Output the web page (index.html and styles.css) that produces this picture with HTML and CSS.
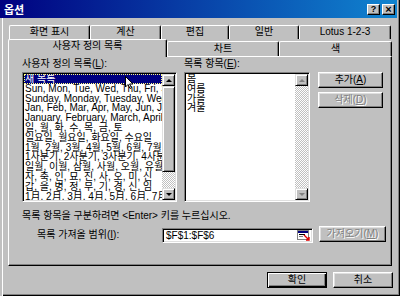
FILE: index.html
```html
<!DOCTYPE html>
<html lang="ko">
<head>
<meta charset="UTF-8">
<meta name="viewport" content="width=device-width, initial-scale=1.0">
<title>옵션</title>
<link rel="stylesheet" href="styles.css">
</head>
<body>
<div class="dialog">
  <div class="titlebar">
    <span class="title">옵션</span>
    <span class="tbtn">?</span>
    <span class="tbtn close">×</span>
  </div>

  <div class="tabs">
    <div class="tabrow back">
      <div class="tab t-view">화면 표시</div>
      <div class="tab t-calc">계산</div>
      <div class="tab t-edit">편집</div>
      <div class="tab t-gen">일반</div>
      <div class="tab t-lotus">Lotus 1-2-3</div>
    </div>
    <div class="tabrow front">
      <div class="tab t-lists active">사용자 정의 목록</div>
      <div class="tab t-chart">차트</div>
      <div class="tab t-color">색</div>
    </div>
  </div>

  <div class="panel">
    <div class="lists">
      <div class="col-lists">
        <div class="label">사용자 정의 목록(<u>L</u>):</div>
        <div class="listbox">
          <div class="items">
            <div class="item selected">새 목록</div>
            <div class="item">Sun, Mon, Tue, Wed, Thu, Fri, Sat</div>
            <div class="item">Sunday, Monday, Tuesday, Wednesday</div>
            <div class="item">Jan, Feb, Mar, Apr, May, Jun, Jul</div>
            <div class="item">January, February, March, April</div>
            <div class="item">일, 월, 화, 수, 목, 금, 토</div>
            <div class="item">일요일, 월요일, 화요일, 수요일</div>
            <div class="item">1월, 2월, 3월, 4월, 5월, 6월, 7월</div>
            <div class="item">1사분기, 2사분기, 3사분기, 4사분기</div>
            <div class="item">일월, 이월, 삼월, 사월, 오월, 유월</div>
            <div class="item">자, 축, 인, 묘, 진, 사, 오, 미, 신</div>
            <div class="item">갑, 을, 병, 정, 무, 기, 경, 신, 임</div>
            <div class="item">1月, 2月, 3月, 4月, 5月, 6月, 7月</div>
          </div>
          <div class="scroll">
            <div class="sbtn up"></div>
            <div class="thumb"></div>
            <div class="track"></div>
            <div class="sbtn down"></div>
          </div>
        </div>
      </div>

      <div class="col-items">
        <div class="label">목록 항목(<u>E</u>):</div>
        <div class="listbox">
          <div class="items">
            <div class="item">봄</div>
            <div class="item">여름</div>
            <div class="item">가을</div>
            <div class="item">겨울</div>
          </div>
          <div class="scroll">
            <div class="sbtn up off"></div>
            <div class="track"></div>
            <div class="sbtn down off"></div>
          </div>
        </div>
      </div>

      <div class="col-btns">
        <div class="btn">추가(<u>A</u>)</div>
        <div class="btn disabled">삭제(<u>D</u>)</div>
      </div>
    </div>

    <div class="hint">목록 항목을 구분하려면 &lt;Enter&gt; 키를 누르십시오.</div>

    <div class="import">
      <div class="import-label">목록 가져올 범위(<u>I</u>):</div>
      <div class="field">
        <span class="field-text">$F$1:$F$6</span>
        <svg class="collapse" width="13" height="11" viewBox="0 0 13 11">
          <rect x="0.5" y="0.5" width="11" height="9" fill="#fff" stroke="#808080"/>
          <rect x="1" y="1" width="10" height="2" fill="#000080"/>
          <rect x="2" y="4" width="6" height="1" fill="#000"/>
          <rect x="2" y="6" width="4" height="1" fill="#808080"/>
          <path d="M7 5 L12 10 M12 7 L12 10 L9 10" stroke="#e00000" stroke-width="1.4" fill="none"/>
        </svg>
      </div>
      <div class="btn btn-import disabled">가져오기(<u>M</u>)</div>
    </div>
  </div>

  <div class="footer">
    <div class="btn btn-foot default">확인</div>
    <div class="btn btn-foot">취소</div>
  </div>

  <svg class="cursor" width="10" height="14" viewBox="0 0 10 14">
    <path d="M0.5 0.5 L0.5 11 L3 8.5 L5 12.5 L6.5 11.8 L4.6 8 L8 8 Z" fill="#fff" stroke="#000" stroke-width="1"/>
  </svg>
</div>
</body>
</html>
```

FILE: styles.css
```css
* {
  box-sizing: border-box;
}
body {
  margin: 0;
  background: #c0c0c0;
  font-family: "Liberation Sans", "Noto Sans CJK KR", sans-serif;
  font-size: 10px;
  color: #000;
}
u {
  text-decoration: underline;
  text-underline-offset: 1px;
}
.dialog {
  position: relative;
  width: 400px;
  height: 296px;
  padding-right: 3px;
  background: #c0c0c0;
  box-shadow: inset 2px 0 #c0c0c0, inset 3px 0 #fff, inset -1px -1px #000, inset -2px -2px #808080;
  overflow: hidden;
}

/* title bar */
.titlebar {
  display: flex;
  align-items: center;
  height: 18px;
  padding: 0 2px 0 4px;
  background: linear-gradient(to right, #000080, #1084d0);
  color: #fff;
  font-size: 11px;
  font-weight: bold;
}
.title {
  flex: 1;
}
.tbtn {
  width: 13px;
  height: 11px;
  background: #c0c0c0;
  color: #000;
  border: 1px solid;
  border-color: #fff #000 #000 #fff;
  box-shadow: inset -1px -1px #808080;
  font-family: "Liberation Sans", sans-serif;
  font-size: 9px;
  line-height: 9px;
  text-align: center;
}
.tbtn.close {
  margin-left: 2px;
  font-size: 11px;
}

/* tabs */
.tabs {
  margin-top: 7px;
}
.tabrow {
  display: flex;
}
.tabrow.back {
  margin-left: 9px;
  height: 14px;
}
.tabrow.front {
  position: relative;
  z-index: 1;
  margin-left: 8px;
  height: 17px;
  align-items: flex-end;
}
.tab {
  text-align: center;
  white-space: nowrap;
  background: #c0c0c0;
  border-top: 1px solid #fff;
  border-left: 1px solid #fff;
  border-right: 1px solid #000;
  box-shadow: inset -1px 0 #808080;
  border-radius: 2px 2px 0 0;
}
.back .tab {
  height: 14px;
  line-height: 12px;
}
.front .tab {
  height: 15px;
  line-height: 13px;
}
.front .tab.active {
  height: 18px;
  margin-bottom: -1px;
  line-height: 12px;
}
.t-view { width: 81px; }
.t-calc { width: 71px; }
.t-edit { width: 68px; }
.t-gen { width: 70px; }
.t-lotus { width: 92px; }
.t-lists { width: 159px; }
.t-chart { width: 112px; }
.t-color { width: 113px; }

/* panel */
.panel {
  width: 384px;
  height: 210px;
  margin-left: 8px;
  padding-left: 13px;
  border-top: 1px solid #fff;
  border-left: 1px solid #fff;
  border-right: 1px solid #000;
  border-bottom: 1px solid #000;
  box-shadow: inset -1px -1px #808080;
}
.lists {
  display: flex;
}
.col-lists {
  width: 155px;
}
.col-items {
  width: 126px;
  margin-left: 7px;
}
.col-btns {
  display: flex;
  flex-direction: column;
  gap: 4px;
  margin-left: 8px;
  padding-top: 15px;
}
.label {
  height: 15px;
  line-height: 13px;
  white-space: nowrap;
}
.listbox {
  display: flex;
  height: 130px;
  padding: 1px;
  background: #fff;
  border: 1px solid;
  border-color: #808080 #fff #fff #808080;
  box-shadow: inset 1px 1px #000, inset -1px -1px #dfdfdf;
}
.items {
  flex: 1;
  overflow: hidden;
}
.item {
  height: 9.8px;
  line-height: 9.8px;
  padding-left: 1px;
  white-space: nowrap;
}
.item.selected {
  background: #000080;
  color: #fff;
  outline: 1px dotted #ffff80;
  outline-offset: -1px;
}

/* scrollbars */
.scroll {
  display: flex;
  flex-direction: column;
  width: 13px;
}
.sbtn,
.thumb {
  flex: none;
  background: #c0c0c0;
  border: 1px solid;
  border-color: #dfdfdf #000 #000 #dfdfdf;
  box-shadow: inset 1px 1px #fff, inset -1px -1px #808080;
}
.sbtn {
  display: flex;
  align-items: center;
  justify-content: center;
  height: 12px;
}
.sbtn::after {
  content: "";
  border-left: 3px solid transparent;
  border-right: 3px solid transparent;
}
.sbtn.up::after {
  border-bottom: 3px solid #000;
}
.sbtn.down::after {
  border-top: 3px solid #000;
}
.sbtn.off.up::after {
  border-bottom-color: #808080;
}
.sbtn.off.down::after {
  border-top-color: #808080;
}
.thumb {
  height: 86px;
}
.track {
  flex: 1;
  background: repeating-conic-gradient(#fff 0 25%, #c0c0c0 0 50%) 0 0 / 2px 2px;
}

/* buttons */
.btn {
  width: 65px;
  height: 16px;
  line-height: 13px;
  text-align: center;
  white-space: nowrap;
  background: #c0c0c0;
  border: 1px solid;
  border-color: #fff #000 #000 #fff;
  box-shadow: inset -1px -1px #808080, inset 1px 1px #dfdfdf;
}
.btn.disabled {
  color: #808080;
  text-shadow: 1px 1px #fff;
}
.btn.default {
  border-color: #000;
  box-shadow: inset 1px 1px #fff, inset -1px -1px #000, inset -2px -2px #808080;
}

/* hint and import row */
.hint {
  margin-top: 7px;
  line-height: 13px;
  white-space: nowrap;
}
.import {
  display: flex;
  height: 17px;
  margin-top: 4px;
}
.import-label {
  width: 140px;
  padding-left: 15px;
  line-height: 17px;
  white-space: nowrap;
}
.field {
  display: flex;
  align-items: center;
  width: 151px;
  height: 15px;
  margin-top: 2px;
  padding: 0 2px 0 3px;
  background: #fff;
  border: 1px solid;
  border-color: #808080 #fff #fff #808080;
  box-shadow: inset 1px 1px #000, inset -1px -1px #dfdfdf;
}
.field-text {
  flex: 1;
}
.btn-import {
  width: 67px;
  margin-left: 6px;
}

/* footer */
.footer {
  display: flex;
  justify-content: flex-end;
  gap: 6px;
  margin-top: 6px;
  padding-right: 4px;
}
.btn-foot {
  width: 60px;
}

.cursor {
  position: absolute;
  left: 125px;
  top: 76px;
}
```
